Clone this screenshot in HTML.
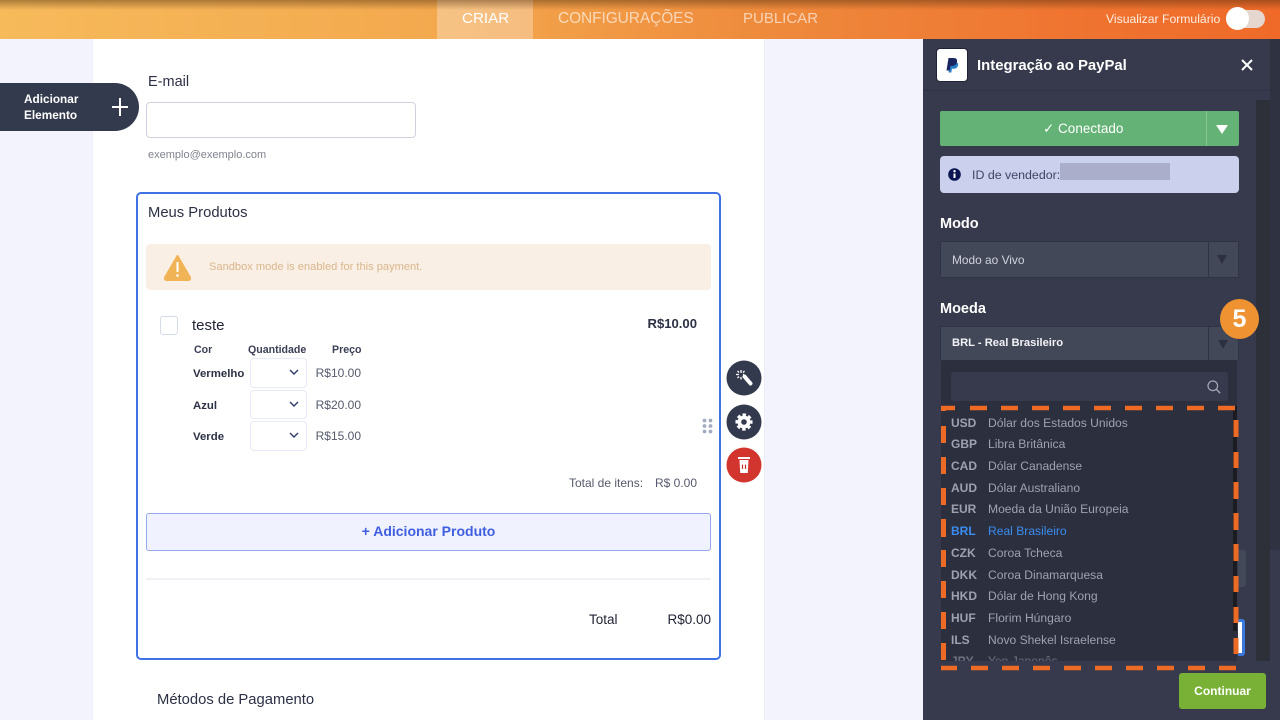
<!DOCTYPE html>
<html lang="pt-BR">
<head>
<meta charset="utf-8">
<title>Integração ao PayPal</title>
<style>
*{box-sizing:border-box;margin:0;padding:0}
html,body{width:1280px;height:720px;overflow:hidden;background:#f3f3fe;font-family:"Liberation Sans",sans-serif}
#w{position:absolute;left:0;top:0;width:1280px;height:720px;overflow:hidden;filter:blur(.35px)}
.a{position:absolute}
.t{position:absolute;white-space:nowrap;line-height:20px;height:20px}
.r{text-align:right}
#top{left:0;top:0;width:1280px;height:39px;background:linear-gradient(90deg,#f6ba5b 0%,#f3a84e 35%,#ee8a3c 60%,#ef7330 85%,#ef6a29 100%)}
#topsh{left:0;top:0;width:1280px;height:10px;background:linear-gradient(180deg,rgba(70,40,10,.42),rgba(70,40,10,0))}
.row-c{font-weight:700;font-size:12px;color:#9ea2b0}
.row-n{font-size:12.1px;color:#9ea2b0}
.sel{position:absolute;left:250px;width:57px;border:1.5px solid #e8eaf6;border-radius:4px;background:#fff}
</style>
</head>
<body>
<div id="w">
<div class="a" style="left:92px;top:39px;width:673px;height:681px;background:#fff;border-left:1px solid #f0f0fa;border-right:1px solid #ececf8"></div>

<div class="a" id="top"></div>
<div class="a" style="left:437px;top:0;width:96px;height:39px;background:rgba(255,255,255,.3)"></div>
<div class="a" id="topsh"></div>
<div class="t" style="left:462px;top:9px;font-size:15.2px;color:#fff">CRIAR</div>
<div class="t" style="left:558px;top:9px;font-size:15.5px;color:rgba(255,255,255,.62);letter-spacing:-.1px">CONFIGURAÇÕES</div>
<div class="t" style="left:743px;top:9px;font-size:15px;color:rgba(255,255,255,.62)">PUBLICAR</div>
<div class="t" style="left:1106px;top:9px;font-size:12.2px;color:#fdeee2">Visualizar Formulário</div>
<div class="a" style="left:1226px;top:10px;width:39px;height:18px;border-radius:9px;background:#e6d6d0"></div>
<div class="a" style="left:1226px;top:7px;width:23px;height:23px;border-radius:50%;background:#fff"></div>

<!-- add element -->
<div class="a" style="left:0;top:83px;width:139px;height:48px;background:#343a4e;border-radius:0 24px 24px 0"></div>
<div class="t" style="left:24px;top:89px;font-size:11.8px;font-weight:700;color:#fff">Adicionar</div>
<div class="t" style="left:24px;top:105px;font-size:11.8px;font-weight:700;color:#fff">Elemento</div>
<svg class="a" style="left:111px;top:97px" width="18" height="20"><path d="M9 1v18M1 10h16" stroke="#fff" stroke-width="2" fill="none"/></svg>

<!-- email -->
<div class="t" style="left:148px;top:72px;font-size:14.5px;color:#2c3045">E-mail</div>
<div class="a" style="left:146px;top:102px;width:270px;height:36px;border:1.5px solid #cfd1dc;border-radius:4px;background:#fff"></div>
<div class="t" style="left:148px;top:145px;font-size:11px;color:#80838f">exemplo@exemplo.com</div>

<!-- product box -->
<div class="a" style="left:136px;top:192px;width:585px;height:468px;border:2px solid #3f72e4;border-radius:5px"></div>
<div class="t" style="left:148px;top:203px;font-size:14.8px;color:#2c3045">Meus Produtos</div>
<div class="a" style="left:146px;top:244px;width:565px;height:46px;background:#f9efe4;border-radius:4px"></div>
<svg class="a" style="left:163px;top:254px" width="29" height="27" viewBox="0 0 29 27"><path d="M14.5 2 L27 23.500 Q27.500 26 25.500 26 H3.500 Q1.500 26 2 23.500 Z" fill="#f0b356" stroke="#f0b356" stroke-width="2" stroke-linejoin="round"/><path d="M14.5 8v10" stroke="#fff" stroke-width="2"/><circle cx="14.5" cy="21.500" r="1.300" fill="#fff"/></svg>
<div class="t" style="left:209px;top:257px;font-size:11.1px;color:#d9b68c">Sandbox mode is enabled for this payment.</div>

<div class="a" style="left:160px;top:316px;width:18px;height:19px;border:1.5px solid #d6dbe8;border-radius:3px"></div>
<div class="t" style="left:192px;top:315px;font-size:15px;color:#1f2333;padding-top:1px">teste</div>
<div class="t r" style="left:597px;width:100px;top:314px;font-size:13.1px;font-weight:700;color:#2c3045">R$10.00</div>

<div class="t" style="left:194px;top:340px;font-size:10.6px;font-weight:700;color:#3a3f55">Cor</div>
<div class="t" style="left:248px;top:340px;font-size:10.6px;font-weight:700;color:#3a3f55">Quantidade</div>
<div class="t" style="left:332px;top:340px;font-size:10.6px;font-weight:700;color:#3a3f55">Preço</div>

<div class="t" style="left:193px;top:364px;font-size:11.4px;font-weight:700;color:#2c3045">Vermelho</div>
<div class="t" style="left:193px;top:396px;font-size:11.4px;font-weight:700;color:#2c3045">Azul</div>
<div class="t" style="left:193px;top:427px;font-size:11.4px;font-weight:700;color:#2c3045">Verde</div>

<div class="sel" style="top:358px;height:30px"></div>
<div class="sel" style="top:390px;height:29px"></div>
<div class="sel" style="top:421px;height:30px"></div>
<svg class="a" style="left:289px;top:369px" width="10" height="7"><path d="M1 1l4 4 4-4" stroke="#2c3a6a" stroke-width="1.400" fill="none"/></svg>
<svg class="a" style="left:289px;top:401px" width="10" height="7"><path d="M1 1l4 4 4-4" stroke="#2c3a6a" stroke-width="1.400" fill="none"/></svg>
<svg class="a" style="left:289px;top:432px" width="10" height="7"><path d="M1 1l4 4 4-4" stroke="#2c3a6a" stroke-width="1.400" fill="none"/></svg>

<div class="t r" style="left:261px;width:100px;top:363px;font-size:12px;color:#555a6c">R$10.00</div>
<div class="t r" style="left:261px;width:100px;top:395px;font-size:12px;color:#555a6c">R$20.00</div>
<div class="t r" style="left:261px;width:100px;top:426px;font-size:12px;color:#555a6c">R$15.00</div>

<div class="t" style="left:569px;top:473px;font-size:12px;color:#555a6c">Total de itens:</div>
<div class="t r" style="left:597px;width:100px;top:473px;font-size:12px;color:#555a6c">R$ 0.00</div>

<div class="a" style="left:146px;top:513px;width:565px;height:38px;background:#f0f2fd;border:1.5px solid #93a8ef;border-radius:3px;text-align:center;font-size:14px;font-weight:700;color:#3f5fe0;line-height:35px">+ Adicionar Produto</div>
<div class="a" style="left:146px;top:578px;width:565px;height:2px;background:#f0f0f6"></div>
<div class="t" style="left:589px;top:610px;font-size:13.5px;color:#1f2333">Total</div>
<div class="t r" style="left:611px;width:100px;top:610px;font-size:13.5px;color:#1f2333">R$0.00</div>
<div class="t" style="left:157px;top:690px;font-size:14.8px;color:#2c3045">Métodos de Pagamento</div>

<!-- grip -->
<svg class="a" style="left:702px;top:418px" width="11" height="16" fill="#a3abc0"><circle cx="2.500" cy="2.500" r="1.900"/><circle cx="8.500" cy="2.500" r="1.900"/><circle cx="2.500" cy="8" r="1.900"/><circle cx="8.500" cy="8" r="1.900"/><circle cx="2.500" cy="13.500" r="1.900"/><circle cx="8.500" cy="13.500" r="1.900"/></svg>
<!-- round actions -->
<svg class="a" style="left:726px;top:360px" width="36" height="124" viewBox="0 0 36 124">
<circle cx="18" cy="18" r="17.500" fill="#343a4e"/>
<path d="M18.500 16.500l6 7" stroke="#fff" stroke-width="4" stroke-linecap="round"/>
<path d="M15 10v3M15 17v2.500M10 14.500h3M17 14.500h1M11.500 11l1.500 1.500M18.500 11L17 12.500M11.500 18l1.500-1.500" stroke="#fff" stroke-width="1.300"/>
<circle cx="18" cy="62" r="17.500" fill="#343a4e"/>
<circle cx="18" cy="62" r="6.500" fill="#fff"/>
<circle cx="18" cy="62" r="7.300" fill="none" stroke="#fff" stroke-width="2.600" stroke-dasharray="3.400 2.333" transform="rotate(-13 18 62)"/>
<circle cx="18" cy="62" r="2.800" fill="#343a4e"/>
<circle cx="18" cy="105" r="17.500" fill="#d2352d"/>
<path d="M12 97h12v2H12zM13.500 100h9l-.7 13h-7.600z" fill="#fff"/>
<path d="M16.500 104.500v4.500M19.500 104.500v4.500" stroke="#d2352d" stroke-width="1.200"/>
</svg>

<!-- right panel -->
<div class="a" style="left:923px;top:39px;width:357px;height:681px;background:#363a4c"></div>
<div class="a" style="left:1270px;top:39px;width:10px;height:511px;background:#2f3240"></div>
<div class="a" style="left:923px;top:90px;width:347px;height:1px;background:#2f3242"></div>
<div class="a" style="left:1256px;top:100px;width:14px;height:561px;background:#2e3039"></div>
<div class="a" style="left:937px;top:49px;width:30px;height:32px;background:#fff;border-radius:3px;box-shadow:0 0 0 1px #1f2236"></div>
<svg class="a" style="left:945px;top:57px" width="14" height="16" viewBox="0 0 14 16"><path d="M5 5h5c2.500 0 3.500 1.500 3 3.500-.5 2.300-2.300 3.300-4.500 3.300H7L6.300 15.500H3.500z" fill="#2a7fc9"/><path d="M3.500 1h5c2.800 0 4 1.500 3.500 3.700C11.500 7.500 9.500 9 7 9H5.500L4.700 13.500H1.500z" fill="#1b2560"/></svg>
<div class="t" style="left:977px;top:56px;font-size:14.900px;font-weight:700;color:#fff">Integração ao PayPal</div>
<svg class="a" style="left:1241px;top:59px" width="12" height="12"><path d="M1 1l10 10M11 1L1 11" stroke="#fff" stroke-width="2"/></svg>

<div class="a" style="left:940px;top:111px;width:299px;height:35px;background:#64b276;border-radius:2px"></div>
<div class="a" style="left:1206px;top:111px;width:1px;height:35px;background:#86c594"></div>
<div class="t" style="left:1043px;top:119px;font-size:13.500px;color:#fff">✓ Conectado</div>
<svg class="a" style="left:1216px;top:125px" width="13" height="9"><path d="M0 0h12L6 9z" fill="#fff"/></svg>

<div class="a" style="left:940px;top:156px;width:299px;height:37px;background:#cbd0ec;border-radius:4px"></div>
<svg class="a" style="left:948px;top:168px" width="13" height="13"><circle cx="6.500" cy="6.500" r="6.300" fill="#0a1551"/><path d="M6.500 5.500v4.500" stroke="#fff" stroke-width="2"/><circle cx="6.500" cy="3.200" r="1.200" fill="#fff"/></svg>
<div class="t" style="left:972px;top:165px;font-size:12.400px;color:#3e4464">ID de vendedor:</div>
<div class="a" style="left:1060px;top:163px;width:110px;height:17px;background:#aaaecb"></div>

<div class="t" style="left:940px;top:214px;font-size:14.500px;font-weight:700;color:#fff">Modo</div>
<div class="a" style="left:941px;top:242px;width:297px;height:35px;background:#434859;box-shadow:0 0 0 1px #303344"></div>
<div class="a" style="left:1208px;top:242px;width:1px;height:35px;background:#303344"></div>
<div class="t" style="left:952px;top:250px;font-size:11.900px;color:#d0d3dc">Modo ao Vivo</div>
<svg class="a" style="left:1217px;top:255px" width="11" height="9"><path d="M0 0h10L5 9z" fill="#2d3040"/></svg>

<div class="t" style="left:940px;top:299px;font-size:14.500px;font-weight:700;color:#fff">Moeda</div>
<div class="a" style="left:941px;top:327px;width:297px;height:33px;background:#434859;box-shadow:0 0 0 1px #303344"></div>
<div class="a" style="left:1208px;top:327px;width:1px;height:33px;background:#303344"></div>
<div class="t" style="left:952px;top:333px;font-size:11.200px;font-weight:700;color:#f2f3f7">BRL - Real Brasileiro</div>
<svg class="a" style="left:1218px;top:340px" width="11" height="9"><path d="M0 0h10L5 9z" fill="#2d3040"/></svg>

<!-- things behind -->
<div class="a" style="left:1238px;top:550px;width:8px;height:37px;background:#434859;border-radius:0 3px 3px 0"></div>
<div class="a" style="left:1238px;top:619px;width:7px;height:37px;background:#3a78de;border-radius:0 3px 3px 0"></div>
<div class="a" style="left:1238px;top:622px;width:4px;height:31px;background:#fff"></div>

<!-- dropdown -->
<div class="a" style="left:941px;top:360px;width:296px;height:301px;background:#2c2f3e"></div>
<div class="a" style="left:951px;top:372px;width:277px;height:29px;background:#363a4c;border-radius:3px"></div>
<svg class="a" style="left:1207px;top:380px" width="14" height="14"><circle cx="5.800" cy="5.800" r="4.800" fill="none" stroke="#a4a8b6" stroke-width="1.200"/><path d="M9.300 9.300l3.800 3.800" stroke="#a4a8b6" stroke-width="1.400"/></svg>
<div class="a" style="left:1233px;top:406px;width:4px;height:225px;background:#1b1c22"></div>

<div class="a" style="left:941px;top:405px;width:292px;height:256px;overflow:hidden">
<div class="t row-c" style="left:10px;top:8px">USD</div><div class="t row-n" style="left:47px;top:8px">Dólar dos Estados Unidos</div>
<div class="t row-c" style="left:10px;top:29px">GBP</div><div class="t row-n" style="left:47px;top:29px">Libra Britânica</div>
<div class="t row-c" style="left:10px;top:51px">CAD</div><div class="t row-n" style="left:47px;top:51px">Dólar Canadense</div>
<div class="t row-c" style="left:10px;top:73px">AUD</div><div class="t row-n" style="left:47px;top:73px">Dólar Australiano</div>
<div class="t row-c" style="left:10px;top:94px">EUR</div><div class="t row-n" style="left:47px;top:94px">Moeda da União Europeia</div>
<div class="t row-c" style="left:10px;top:116px;color:#3a8df0">BRL</div><div class="t row-n" style="left:47px;top:116px;color:#3a8df0">Real Brasileiro</div>
<div class="t row-c" style="left:10px;top:138px">CZK</div><div class="t row-n" style="left:47px;top:138px">Coroa Tcheca</div>
<div class="t row-c" style="left:10px;top:160px">DKK</div><div class="t row-n" style="left:47px;top:160px">Coroa Dinamarquesa</div>
<div class="t row-c" style="left:10px;top:181px">HKD</div><div class="t row-n" style="left:47px;top:181px">Dólar de Hong Kong</div>
<div class="t row-c" style="left:10px;top:203px">HUF</div><div class="t row-n" style="left:47px;top:203px">Florim Húngaro</div>
<div class="t row-c" style="left:10px;top:225px">ILS</div><div class="t row-n" style="left:47px;top:225px">Novo Shekel Israelense</div>
<div class="t row-c" style="left:10px;top:246px">JPY</div><div class="t row-n" style="left:47px;top:246px">Yen Japonês</div>
<div class="a" style="left:0;top:244px;width:292px;height:12px;background:linear-gradient(180deg,rgba(44,47,62,0),rgba(44,47,62,.55))"></div>
</div>

<!-- badge -->
<div class="a" style="left:1220px;top:299px;width:39px;height:40px;border-radius:50%;background:#ef9231;color:#fff;font-weight:700;font-size:25px;line-height:40px;text-align:center">5</div>

<!-- footer -->
<div class="a" style="left:923px;top:661px;width:357px;height:59px;background:#363a4c"></div>
<div class="a" style="left:1179px;top:673px;width:87px;height:36px;background:#78b135;border-radius:3px;color:#fff;font-weight:700;font-size:12px;line-height:36px;text-align:center">Continuar</div>

<!-- dashed outline -->
<svg class="a" style="left:0;top:0" width="1280" height="720">
<g stroke="#ee6b26" stroke-width="4.500" fill="none">
<path d="M941 408H1235" stroke-dasharray="14 15 17 14 17 14 17 14 17 14 17 14 17 14 17 14 17 14 17 14"/>
<path d="M941 668H1236" stroke-dasharray="16 14 17 14 17 14 17 14 17 14 17 14 17 14 17 14 17 14 17 14"/>
</g>
<g stroke="#ee6b26" stroke-width="5" fill="none">
<path d="M943.500 406V411M943.500 426V443M943.500 457V474M943.500 488V505M943.500 519V537M943.500 550V567M943.500 581V598M943.500 612V629M943.500 643V660"/>
<path d="M1236 420V437M1236 452V468M1236 482V499M1236 513V530M1236 544V561M1236 576V592M1236 607V623M1236 638V654"/>
</g>
</svg>
</div>
</body>
</html>
